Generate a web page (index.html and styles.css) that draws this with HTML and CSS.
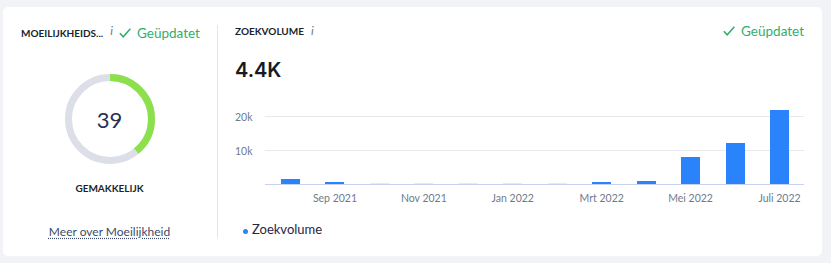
FILE: index.html
```html
<!DOCTYPE html>
<html lang="nl">
<head>
    <meta charset="UTF-8">
    <meta name="viewport" content="width=device-width, initial-scale=1.0">
    <title>Zoekwoordoverzicht</title>
    <link rel="stylesheet" href="styles.css">
</head>
<body>
    <div class="card">
        <section class="kd">
            <div class="head">
                <span class="title">MOEILIJKHEIDS...</span>
                <span class="info">i</span>
                <span class="status">
                    <svg width="12" height="10" viewBox="0 0 12 10"><polyline points="0.8,5.2 4.2,8.8 11.4,0.8" fill="none" stroke="currentColor" stroke-width="1.5"/></svg>
                    Geüpdatet
                </span>
            </div>
            <div class="gauge">
                <svg width="90" height="90" viewBox="0 0 90 90">
                    <circle cx="45" cy="45" r="41.5" fill="none" stroke="#dcdfe8" stroke-width="7"/>
                    <circle cx="45" cy="45" r="41.5" fill="none" stroke="#8ce04b" stroke-width="7"
                        stroke-dasharray="101.7 260.8" transform="rotate(-90 45 45)"/>
                </svg>
                <span class="gauge-value">39</span>
            </div>
            <div class="kd-label">GEMAKKELIJK</div>
            <a class="more" href="#">Meer over Moeilijkheid</a>
        </section>

        <section class="volume">
            <div class="head">
                <span class="title">ZOEKVOLUME</span>
                <span class="info">i</span>
                <span class="status right">
                    <svg width="12" height="10" viewBox="0 0 12 10"><polyline points="0.8,5.2 4.2,8.8 11.4,0.8" fill="none" stroke="currentColor" stroke-width="1.5"/></svg>
                    Geüpdatet
                </span>
            </div>
            <div class="value">4.4K</div>
            <div class="chart">
                <div class="y-axis">
                    <span>20k</span>
                    <span>10k</span>
                </div>
                <div class="plot">
                    <div class="bar" style="height: 5px"></div>
                    <div class="bar" style="height: 2px"></div>
                    <div class="bar empty"></div>
                    <div class="bar empty"></div>
                    <div class="bar empty"></div>
                    <div class="bar empty"></div>
                    <div class="bar empty"></div>
                    <div class="bar" style="height: 2px"></div>
                    <div class="bar" style="height: 3px"></div>
                    <div class="bar" style="height: 27px"></div>
                    <div class="bar" style="height: 41px"></div>
                    <div class="bar" style="height: 74px"></div>
                </div>
                <div class="x-axis">
                    <span></span><span>Sep 2021</span>
                    <span></span><span>Nov 2021</span>
                    <span></span><span>Jan 2022</span>
                    <span></span><span>Mrt 2022</span>
                    <span></span><span>Mei 2022</span>
                    <span></span><span>Juli 2022</span>
                </div>
            </div>
            <div class="legend">Zoekvolume</div>
        </section>
    </div>
</body>
</html>
```

FILE: styles.css
```css
* {
    margin: 0;
    padding: 0;
    box-sizing: border-box;
}
body {
    font-family: Lato, "Noto Sans", sans-serif;
    background-color: #f2f3f7;
    color: #1b1f2e;
}
.card {
    display: flex;
    height: 249px;
    margin: 7px 9px 0 3px;
    padding: 18px;
    background: white;
    border-radius: 5px;
}
.head {
    display: flex;
    align-items: center;
    width: 100%;
    height: 16px;
}
.title {
    font-size: 10px;
    font-weight: 700;
}
.info {
    align-self: flex-start;
    margin-left: 7px;
    font-size: 12px;
    font-style: italic;
    line-height: 12px;
    color: #6b7893;
}
.status {
    display: flex;
    align-items: center;
    gap: 6px;
    margin-left: 6px;
    font-size: 13.5px;
    color: #2eaf6c;
}
.status.right {
    margin-left: auto;
}

/* difficulty */
.kd {
    width: 197px;
    padding-right: 19px;
    border-right: 1px solid #e4e6eb;
    display: flex;
    flex-direction: column;
    align-items: center;
}
.gauge {
    display: grid;
    place-items: center;
    width: 90px;
    height: 90px;
    margin-top: 33px;
}
.gauge > * {
    grid-area: 1 / 1;
}
.gauge-value {
    font-size: 22px;
    color: #262f56;
}
.kd-label {
    margin-top: 17px;
    font-size: 10px;
    font-weight: 700;
    line-height: 14px;
}
.more {
    margin-top: 29px;
    font-size: 12px;
    line-height: 16px;
    color: #3d4b68;
    text-decoration: underline dotted;
    text-underline-offset: 2px;
}

/* search volume */
.volume {
    flex: 1;
    padding-left: 17px;
    display: flex;
    flex-direction: column;
}
.volume .head {
    height: 12px;
}
.value {
    margin-top: 21px;
    font-family: Inter, sans-serif;
    font-size: 20px;
    font-weight: 600;
    line-height: 24px;
    color: #171a22;
}
.chart {
    margin-top: 24px;
    display: grid;
    grid-template-columns: 30px 1fr;
}
.y-axis {
    display: flex;
    flex-direction: column;
    gap: 22px;
    padding-top: 5px;
    font-size: 10.5px;
    line-height: 12px;
    color: #6e7b8b;
}
.plot {
    height: 79px;
    padding: 0 15px 0 16px;
    display: flex;
    align-items: flex-end;
    justify-content: space-between;
    border-bottom: 1px solid #c6d2ef;
    background:
        linear-gradient(#e7e9ee, #e7e9ee) 0 10px / 100% 1px no-repeat,
        linear-gradient(#e7e9ee, #e7e9ee) 0 44px / 100% 1px no-repeat;
}
.bar {
    width: 19px;
    background: #2b83fb;
}
.bar.empty {
    height: 1px;
    background: #e3eafb;
}
.x-axis {
    grid-column: 2;
    margin-top: 6px;
    padding: 0 15px 0 16px;
    display: flex;
    justify-content: space-between;
    font-size: 10.5px;
    line-height: 14px;
    color: #6e7b8b;
}
.x-axis span {
    width: 19px;
    display: flex;
    justify-content: center;
    white-space: nowrap;
}
.legend {
    margin-top: 16px;
    padding-left: 8px;
    display: flex;
    align-items: center;
    gap: 4px;
    font-size: 13px;
    line-height: 16px;
    color: #1f2646;
}
.legend::before {
    content: "";
    width: 5px;
    height: 5px;
    margin-top: 4px;
    border-radius: 50%;
    background: #2b83fb;
}
```
